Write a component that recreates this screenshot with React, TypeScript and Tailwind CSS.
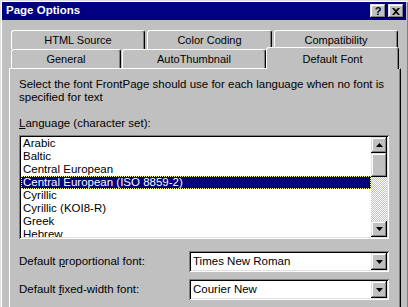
const raised =
  "shadow-[inset_-1px_-1px_#000,inset_1px_1px_#dfdfdf,inset_-2px_-2px_#808080,inset_2px_2px_#fff]"
const sunken =
  "shadow-[inset_1px_1px_#808080,inset_-1px_-1px_#fff,inset_2px_2px_#000,inset_-2px_-2px_#dfdfdf]"

const backTabs = [
  { label: "HTML Source", w: "w-[134px]" },
  { label: "Color Coding", w: "w-[125px]" },
  { label: "Compatibility", w: "w-[124px]" },
]

const frontTabs = [
  { label: "General", w: "w-[110px]" },
  { label: "AutoThumbnail", w: "w-[144px]" },
]

const languages = [
  "Arabic",
  "Baltic",
  "Central European",
  "Central European (ISO 8859-2)",
  "Cyrillic",
  "Cyrillic (KOI8-R)",
  "Greek",
  "Hebrew",
]

function Arrow({ down }: { down?: boolean }) {
  return (
    <svg width="7" height="4" viewBox="0 0 7 4" className="block">
      {down ? <path d="M0 0h7L3.5 4z" fill="#000" /> : <path d="M0 4h7L3.5 0z" fill="#000" />}
    </svg>
  )
}

function Tab({ label, w }: { label: string; w: string }) {
  return (
    <div
      className={`${w} h-full flex items-center justify-center pt-[1px] text-[11px] border-l border-t border-white border-r border-r-black rounded-t-[3px] shadow-[inset_-1px_0_#808080]`}
    >
      {label}
    </div>
  )
}

function Combo({ value }: { value: string }) {
  return (
    <div className={`w-[200px] h-[21px] bg-white ${sunken} flex items-center p-[2px]`}>
      <div className="flex-1 pl-[2px] leading-[13px]">{value}</div>
      <div className={`w-[16px] h-[17px] bg-[#c0c0c0] ${raised} flex items-center justify-center`}>
        <Arrow down />
      </div>
    </div>
  )
}

export default function App() {
  return (
    <div className="w-[408px] h-[307px] overflow-hidden bg-[#c0c0c0] pl-[2px] pt-[2px] pr-[1px] flex flex-col text-[11.5px] text-black font-['Liberation_Sans',Arial,sans-serif] shadow-[inset_1px_1px_#dfdfdf,inset_2px_2px_#fff,inset_-1px_0_#808080]">
      {/* title bar */}
      <div className="h-[18px] mr-[1px] bg-[#000080] flex items-center pl-[4px] pr-[2px]">
        <div className="flex-1 text-white font-bold text-[11.5px] leading-none">Page Options</div>
        <div className="flex gap-[2px]">
          <div className={`w-[16px] h-[14px] bg-[#c0c0c0] ${raised} flex items-center justify-center font-bold text-[11px] leading-none`}>
            ?
          </div>
          <div className={`w-[16px] h-[14px] bg-[#c0c0c0] ${raised} flex items-center justify-center`}>
            <svg width="8" height="7" viewBox="0 0 8 7">
              <path d="M0 0h2l2 2 2-2h2L5 3.5 8 7H6L4 5 2 7H0l3-3.5z" fill="#000" />
            </svg>
          </div>
        </div>
      </div>

      {/* tabs */}
      <div className="mt-[10px] pl-[9px]">
        <div className="flex gap-[2px] h-[19px]">
          {backTabs.map((t) => (
            <Tab key={t.label} {...t} />
          ))}
        </div>
        <div className="flex h-[19px]">
          {frontTabs.map((t, i) => (
            <div key={t.label} className={i === 0 ? "mr-[1px] h-full" : "h-full"}>
              <Tab {...t} />
            </div>
          ))}
          <div className="relative z-10 -mt-[2px] w-[133px] h-[22px] bg-[#c0c0c0] flex items-start justify-center pt-[3px] text-[11px] border-l border-t border-white border-r border-r-black rounded-t-[3px] shadow-[inset_-1px_0_#808080]">
            Default Font
          </div>
        </div>
      </div>

      {/* panel */}
      <div className="ml-[7px] w-[392px] flex-1 border-l border-t border-white border-r border-r-black shadow-[inset_-1px_0_#808080] pl-[9px] pr-[10px] pt-[9px]">
        <p className="leading-[13px]">
          Select the font FrontPage should use for each language when no font is
          <br />
          specified for text
        </p>
        <div className="mt-[13px] leading-[13px]">
          <u>L</u>anguage (character set):
        </div>

        <div className={`mt-[5px] w-[370px] h-[104px] bg-white ${sunken} p-[2px] flex`}>
          <div className="flex-1 overflow-hidden">
            {languages.map((lang, i) =>
              i === 3 ? (
                <div
                  key={lang}
                  className="h-[13px] leading-[11px] bg-[#000080] text-white border border-dotted border-[#ffff9f] pl-[1px]"
                >
                  {lang}
                </div>
              ) : (
                <div key={lang} className="h-[13px] leading-[13px] pl-[2px]">
                  {lang}
                </div>
              ),
            )}
          </div>
          <div className="w-[16px] flex flex-col">
            <div className={`h-[16px] bg-[#c0c0c0] ${raised} flex items-center justify-center`}>
              <Arrow />
            </div>
            <div className={`h-[24px] bg-[#c0c0c0] ${raised}`} />
            <div className="flex-1 bg-[repeating-conic-gradient(#c0c0c0_0_25%,#fff_0_50%)] bg-[length:2px_2px]" />
            <div className={`h-[16px] bg-[#c0c0c0] ${raised} flex items-center justify-center`}>
              <Arrow down />
            </div>
          </div>
        </div>

        <div className="mt-[12px] w-[370px] flex items-center justify-between">
          <div>
            Default <u>p</u>roportional font:
          </div>
          <Combo value="Times New Roman" />
        </div>
        <div className="mt-[7px] w-[370px] flex items-center justify-between">
          <div>
            Default <u>f</u>ixed-width font:
          </div>
          <Combo value="Courier New" />
        </div>
      </div>
    </div>
  )
}
